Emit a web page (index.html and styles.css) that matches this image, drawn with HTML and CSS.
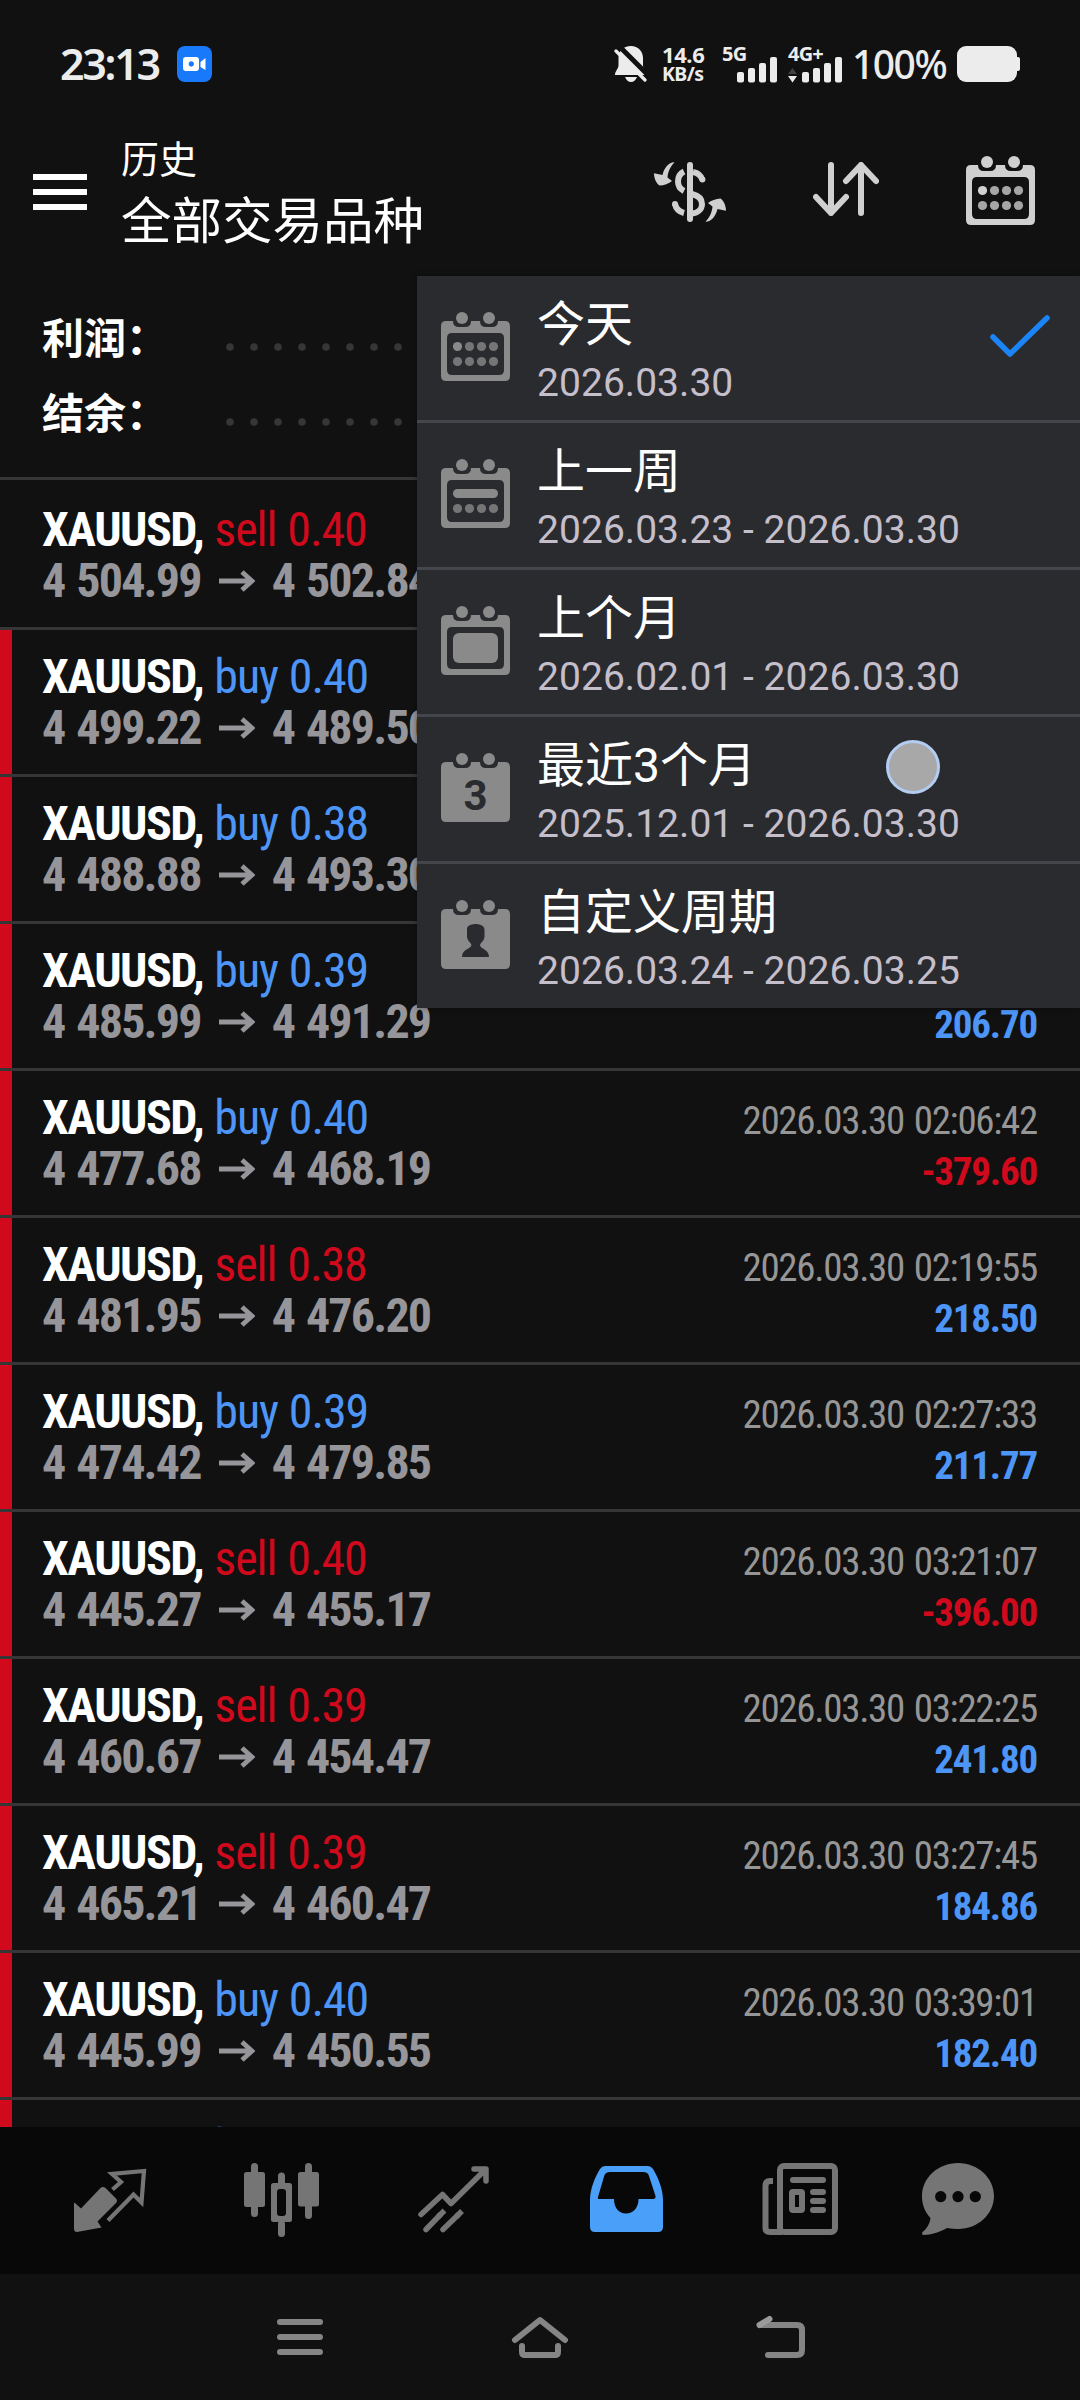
FILE: index.html
```html
<!DOCTYPE html>
<html lang="zh-CN">
<head>
<meta charset="utf-8">
<title>历史</title>
<link rel="stylesheet" href="styles.css">
</head>
<body>
<svg width="0" height="0" class="defs">
  <symbol id="cal-frame" viewBox="0 0 69 69">
    <path fill-rule="evenodd" fill="currentColor" d="M5 9H12Q12 15 18 15H24Q30 15 30 9H39Q39 15 45 15H51Q57 15 57 9H64Q69 9 69 14V64Q69 69 64 69H5Q0 69 0 64V14Q0 9 5 9ZM11 21Q6 21 6 26V58Q6 63 11 63H58Q63 63 63 58V26Q63 21 58 21Z"/>
    <circle cx="21" cy="6" r="6" fill="currentColor"/><circle cx="48" cy="6" r="6" fill="currentColor"/>
  </symbol>
  <symbol id="cal-solid" viewBox="0 0 69 69">
    <path fill="currentColor" d="M5 9H12Q12 15 18 15H24Q30 15 30 9H39Q39 15 45 15H51Q57 15 57 9H64Q69 9 69 14V64Q69 69 64 69H5Q0 69 0 64V14Q0 9 5 9Z"/>
    <circle cx="21" cy="6" r="6" fill="currentColor"/><circle cx="48" cy="6" r="6" fill="currentColor"/>
  </symbol>
  <symbol id="cal-dots" viewBox="0 0 69 69">
    <circle cx="16.5" cy="34.5" r="4.6" fill="currentColor"/>
    <g fill="currentColor" opacity=".78"><circle cx="28.5" cy="34.5" r="4.6"/><circle cx="40.5" cy="34.5" r="4.6"/><circle cx="52.5" cy="34.5" r="4.6"/></g>
  </symbol>
  <symbol id="cal-dots2" viewBox="0 0 69 69">
    <g fill="currentColor" opacity=".78"><circle cx="16.5" cy="49.5" r="4.6"/><circle cx="28.5" cy="49.5" r="4.6"/><circle cx="40.5" cy="49.5" r="4.6"/><circle cx="52.5" cy="49.5" r="4.6"/></g>
  </symbol>
  <symbol id="arrow" viewBox="0 0 36 22">
    <path d="M0 11H32M23 2L33 11L23 20" fill="none" stroke="currentColor" stroke-width="4.8"/>
  </symbol>
</svg>
<div class="screen">
  <header class="status">
    <span class="clock">23:13</span>
    <svg class="cam" width="35" height="36" viewBox="0 0 35 36"><rect width="35" height="36" rx="8" fill="#1979fb"/><path fill="#fff" fill-rule="evenodd" d="M9 11H19Q22 11 22 14V22Q22 25 19 25H9Q6 25 6 22V14Q6 11 9 11ZM14.300 15.300a2.700 2.700 0 1 0 .01 0Z"/><path fill="#fff" d="M23.500 16L28.500 12V24L23.500 21Z"/></svg>
    <svg class="bell" width="34" height="37" viewBox="0 0 34 37"><path fill="#ececec" d="M17 0C9 0 4.500 5 4.500 12V19C4.500 23 1 25 1 29H32C32 25 29 23 29 19V12C29 5 24 0 17 0ZM11 31H23Q21 36 17 36T11 31Z"/><path d="M5 0L36 31" stroke="#111" stroke-width="5"/><path d="M2 5L31 34" stroke="#ececec" stroke-width="3.200" stroke-linecap="round"/></svg>
    <span class="speed"><b>14.6</b><i>KB/s</i></span>
    <span class="sim sim-a"><b>5G</b>
      <svg width="40" height="26" viewBox="0 0 40 26" fill="#ececec"><rect x="0" y="15" width="7" height="10.500" rx="2"/><rect x="11" y="11" width="7" height="14.500" rx="2"/><rect x="22" y="6" width="7" height="19.500" rx="2"/><rect x="33" y="0" width="7" height="25.500" rx="2"/></svg></span>
    <span class="sim sim-b"><b>4G+</b>
      <svg width="54" height="26" viewBox="-14 0 54 26" fill="#ececec"><path d="M-14 17L-9.500 11L-5 17Z" opacity=".22"/><path d="M-14 19H-5L-9.500 25.500Z"/><rect x="0" y="15" width="7" height="10.500" rx="2"/><rect x="11" y="11" width="7" height="14.500" rx="2"/><rect x="22" y="6" width="7" height="19.500" rx="2"/><rect x="33" y="0" width="7" height="25.500" rx="2"/></svg></span>
    <span class="pct">100%</span>
    <svg class="batt" width="63" height="36" viewBox="0 0 63 36" fill="#ececec"><rect width="60" height="36" rx="9"/><rect x="57" y="11" width="6" height="14" rx="2"/></svg>
  </header>

  <div class="appbar">
    <div class="burger"><span></span><span></span><span></span></div>
    <div class="titles"><div class="sub">历史</div><div class="title">全部交易品种</div></div>
    <div class="actions">
      <svg width="72" height="60" viewBox="0 0 72 60"><g fill="none" stroke="currentColor" stroke-width="6"><path d="M36 3V57" stroke-linecap="round"/><path d="M30 9.500Q24 12.500 24 19.500Q24 26 30 29"/><path d="M21 42Q22.500 49 30 51"/><path d="M39 10C44 11 47 13 48.500 18"/><path d="M38 32C46 34 48 38 48 42C48 47 44 51 38 51.500"/></g><g fill="currentColor"><circle cx="21" cy="42" r="3"/><circle cx="48.400" cy="17.500" r="3"/><path id="swirl" d="M20.500 .3C15 0 10 6 8.500 13L0 11.300C0 16 2 21 5.500 23.600C10 23.500 15 21.500 18 19L13.500 15.500C14 9 17 4 20.500 .3Z"/><use href="#swirl" transform="rotate(180 36 30)"/></g></svg>
      <svg width="66" height="54" viewBox="0 0 66 54" fill="none" stroke="currentColor" stroke-width="6" stroke-linecap="round" stroke-linejoin="round"><path d="M18 3V51M3 35L18 51L33 35M48 51V3M33 19L48 3L63 19"/></svg>
      <svg class="cal" width="69" height="69"><use href="#cal-frame"/><use href="#cal-dots"/><use href="#cal-dots2"/></svg>
    </div>
  </div>

  <section class="summary">
    <div class="sum-row"><span>利润：</span><svg width="440" height="8"><path d="M4 4H436" stroke="#363636" stroke-width="7.600" stroke-linecap="round" stroke-dasharray="0 24"/></svg></div>
    <div class="sum-row"><span>结余：</span><svg width="440" height="8"><path d="M4 4H436" stroke="#363636" stroke-width="7.600" stroke-linecap="round" stroke-dasharray="0 24"/></svg></div>
  </section>

  <main class="list">
    <div class="row plain"><div class="l"><p><b>XAUUSD,</b> <span class="sell">sell 0.40</span></p><p class="px">4 504.99<svg><use href="#arrow"/></svg>4 502.84</p></div></div>
    <div class="row"><div class="l"><p><b>XAUUSD,</b> <span class="buy">buy 0.40</span></p><p class="px">4 499.22<svg><use href="#arrow"/></svg>4 489.50</p></div></div>
    <div class="row"><div class="l"><p><b>XAUUSD,</b> <span class="buy">buy 0.38</span></p><p class="px">4 488.88<svg><use href="#arrow"/></svg>4 493.30</p></div></div>
    <div class="row"><div class="l"><p><b>XAUUSD,</b> <span class="buy">buy 0.39</span></p><p class="px">4 485.99<svg><use href="#arrow"/></svg>4 491.29</p></div><div class="r"><p>&nbsp;</p><p class="amt buy">206.70</p></div></div>
    <div class="row"><div class="l"><p><b>XAUUSD,</b> <span class="buy">buy 0.40</span></p><p class="px">4 477.68<svg><use href="#arrow"/></svg>4 468.19</p></div><div class="r"><p>2026.03.30 02:06:42</p><p class="amt sell">-379.60</p></div></div>
    <div class="row"><div class="l"><p><b>XAUUSD,</b> <span class="sell">sell 0.38</span></p><p class="px">4 481.95<svg><use href="#arrow"/></svg>4 476.20</p></div><div class="r"><p>2026.03.30 02:19:55</p><p class="amt buy">218.50</p></div></div>
    <div class="row"><div class="l"><p><b>XAUUSD,</b> <span class="buy">buy 0.39</span></p><p class="px">4 474.42<svg><use href="#arrow"/></svg>4 479.85</p></div><div class="r"><p>2026.03.30 02:27:33</p><p class="amt buy">211.77</p></div></div>
    <div class="row"><div class="l"><p><b>XAUUSD,</b> <span class="sell">sell 0.40</span></p><p class="px">4 445.27<svg><use href="#arrow"/></svg>4 455.17</p></div><div class="r"><p>2026.03.30 03:21:07</p><p class="amt sell">-396.00</p></div></div>
    <div class="row"><div class="l"><p><b>XAUUSD,</b> <span class="sell">sell 0.39</span></p><p class="px">4 460.67<svg><use href="#arrow"/></svg>4 454.47</p></div><div class="r"><p>2026.03.30 03:22:25</p><p class="amt buy">241.80</p></div></div>
    <div class="row"><div class="l"><p><b>XAUUSD,</b> <span class="sell">sell 0.39</span></p><p class="px">4 465.21<svg><use href="#arrow"/></svg>4 460.47</p></div><div class="r"><p>2026.03.30 03:27:45</p><p class="amt buy">184.86</p></div></div>
    <div class="row"><div class="l"><p><b>XAUUSD,</b> <span class="buy">buy 0.40</span></p><p class="px">4 445.99<svg><use href="#arrow"/></svg>4 450.55</p></div><div class="r"><p>2026.03.30 03:39:01</p><p class="amt buy">182.40</p></div></div>
    <div class="row"><div class="l"><p><b>XAUUSD,</b> <span class="buy">buy</span></p></div></div>
  </main>

  <nav class="tabs">
    <svg viewBox="64 2155 96 90"><path fill="currentColor" d="M74 2203L75 2203L81 2208.500L100.500 2188Q103 2186 105.500 2188L116 2198.500Q118 2201 116 2203L97.500 2221.500L101.500 2227.500L77 2232Q74 2232 74 2229Z"/><path fill="none" stroke="currentColor" stroke-width="4.200" d="M112.500 2189.500L121 2182L112 2174L144 2171L141.500 2202.500L133.500 2194.500L108 2220.500"/></svg>
    <svg viewBox="233 2155 96 90"><g fill="none" stroke="currentColor" stroke-width="7" stroke-linecap="round"><path d="M254.500 2166.500V2213.500M308.500 2166.500V2215.500M281.500 2176V2183M281.500 2224V2233.500"/></g><g fill="currentColor"><rect x="244" y="2172" width="21" height="35" rx="2.500"/><rect x="298" y="2172" width="21" height="34.500" rx="2.500"/><path fill-rule="evenodd" d="M273.500 2183H289.500Q292 2183 292 2185.500V2219.500Q292 2222 289.500 2222H273.500Q271 2222 271 2219.500V2185.500Q271 2183 273.500 2183ZM280 2189Q277 2189 277 2192V2213Q277 2216 280 2216H283Q286 2216 286 2213V2192Q286 2189 283 2189Z"/></g></svg>
    <svg viewBox="405 2155 96 90" fill="none" stroke="currentColor" stroke-width="5.500" stroke-linecap="round"><path stroke-linejoin="round" d="M421 2214.500L442.500 2194.500L451 2203.500L485 2170M474 2169H486V2181"/><path d="M426 2229.500L440 2215M443 2229.500L458 2215"/><path stroke-linecap="butt" d="M438 2217L444.500 2210.500M456 2217L462 2211"/></svg>
    <svg class="on" viewBox="578 2155 96 90"><path fill="currentColor" fill-rule="evenodd" d="M590 2227V2200C590 2189 595 2177 600 2169Q602 2166 605 2166H648Q651 2166 653 2169C658 2177 663 2189 663 2200V2227Q663 2232 658 2232H595Q590 2232 590 2227ZM598 2197Q597 2199 600 2199H614C614 2208 619 2213.500 626 2213.500S638.500 2208 638.500 2199H653Q656 2199 655.500 2196L649 2176Q648 2172 643 2172H610Q606 2172 604.500 2175Z"/></svg>
    <svg viewBox="752 2155 96 90" fill="none" stroke="currentColor" stroke-width="6"><rect x="780" y="2166" width="55" height="66" rx="4"/><path d="M773 2181H770Q765.500 2181 765.500 2186V2228Q765.500 2232 770 2232H782"/><path stroke-linecap="round" d="M793 2180H823M813 2192H823M813 2201H823M813 2210H823"/><rect x="792" y="2192" width="10" height="18" rx="1"/></svg>
    <svg viewBox="910 2155 96 90"><path fill="currentColor" fill-rule="evenodd" d="M958 2163C978 2163 994 2178 994 2196S978 2229 958 2229Q952 2229 947 2228C940 2232 931 2235 924 2235Q921 2234.500 922.500 2232C927 2229 930 2223 930.500 2218C925 2212 922 2205 922 2196C922 2178 938 2163 958 2163ZM940.700 2191a5.600 5.600 0 1 0 .01 0ZM958 2191a5.600 5.600 0 1 0 .01 0ZM975.300 2191a5.600 5.600 0 1 0 .01 0Z"/></svg>
  </nav>
  <footer class="sys">
    <svg viewBox="0 0 60 46"><path d="M10 8H50M10 23H50M10 38H50"/></svg>
    <svg viewBox="0 0 60 46"><path stroke-linejoin="round" d="M5 26L30 6L55 26M12 32V38Q12 41 15 41H45Q48 41 48 38V32"/></svg>
    <svg viewBox="0 0 60 46"><path d="M10 11H47Q52 11 52 16V36Q52 41 47 41H18"/><path class="faint" d="M9.500 11L19.500 5"/></svg>
  </footer>

  <div class="menu">
    <div class="item"><svg width="69" height="69"><use href="#cal-frame"/><use href="#cal-dots"/><use href="#cal-dots2"/></svg><div><p class="name">今天</p><p class="range">2026.03.30</p></div>
      <svg class="check" width="60" height="42" viewBox="0 0 60 42"><path d="M3 22L20 39L57 3" fill="none" stroke="#1b84f6" stroke-width="5.500" stroke-linecap="round" stroke-linejoin="round"/></svg></div>
    <div class="item"><svg width="69" height="69"><use href="#cal-frame"/><rect x="12" y="30" width="45" height="9" rx="4.500" fill="currentColor"/><use href="#cal-dots2"/></svg><div><p class="name">上一周</p><p class="range">2026.03.23 - 2026.03.30</p></div></div>
    <div class="item"><svg width="69" height="69"><use href="#cal-frame"/><rect x="12" y="27" width="45" height="30" rx="6" fill="currentColor"/></svg><div><p class="name">上个月</p><p class="range">2026.02.01 - 2026.03.30</p></div></div>
    <div class="item"><svg width="69" height="69"><use href="#cal-solid"/><text class="three" x="34.500" y="57" text-anchor="middle">3</text></svg><div><p class="name">最近3个月</p><p class="range">2025.12.01 - 2026.03.30</p></div></div>
    <div class="item"><svg width="69" height="69"><use href="#cal-solid"/><path fill="#2a2b2f" d="M34 24C40 24 44 26 43.500 31V37C43 41 40 42 39 45C39 49 48 49 48 57H21C21 49 30 49 30.500 45C29.500 42 26.500 41 26 37V28Q27 24.500 34 24Z"/></svg><div><p class="name">自定义周期</p><p class="range">2026.03.24 - 2026.03.25</p></div></div>
    <span class="touch"></span>
  </div>
</div>
</body>
</html>
```
FILE: styles.css
```css
* { box-sizing: border-box; }
body { margin: 0; background: #111; }
p { margin: 0; }
svg { display: block; flex: none; }
.defs { position: absolute; }

.screen {
  position: relative;
  display: flex;
  flex-direction: column;
  width: 1080px;
  height: 2400px;
  overflow: hidden;
  background: #111;
  color: #fff;
  font-family: "Roboto", "Noto Sans CJK SC", sans-serif;
}

/* status bar */
.status {
  display: flex;
  align-items: flex-start;
  height: 132px;
  padding: 46px 60px 0 60px;
  color: #ececec;
  font-family: "Noto Sans", sans-serif;
  white-space: nowrap;
}
.clock { width: 117px; font-size: 43px; font-weight: 600; line-height: 35px; letter-spacing: -2.300px; }
.bell { margin-left: 402px; }
.speed { display: flex; flex-direction: column; width: 60px; margin-left: 14px; }
.speed b { font-size: 22px; font-weight: 700; line-height: 17px; letter-spacing: -.4px; }
.speed i { margin-top: 2px; font-size: 19.500px; font-style: normal; font-weight: 700; line-height: 18px; letter-spacing: -.6px; }
.sim { display: flex; flex-direction: column; }
.sim b { height: 11px; font-size: 20px; font-weight: 700; line-height: 15px; letter-spacing: -.8px; }
.sim svg { align-self: flex-end; }
.sim-a { width: 55px; }
.sim-b { width: 54px; margin-left: 11px; }
.pct { width: 105px; margin-left: 10px; font-size: 39px; font-weight: 500; line-height: 36px; letter-spacing: -1.500px; }

/* app bar */
.appbar { display: flex; height: 144px; padding-left: 33px; }
.burger { display: flex; flex-direction: column; gap: 9px; width: 54px; margin-top: 42px; }
.burger span { height: 6px; background: #fff; }
.titles { margin-left: 34px; white-space: nowrap; }
.sub { margin-top: 6px; font-size: 38px; line-height: 44px; }
.title { margin-top: 11px; font-size: 50.500px; line-height: 58px; }
.actions { display: flex; align-items: flex-start; gap: 87px; margin: 30px 45px 0 auto; color: #d0d0d0; }
.actions .cal { margin-top: -6px; }

/* totals */
.summary { height: 204px; padding: 26px 0 0 42px; border-bottom: 3px solid #363636; }
.sum-row { display: flex; align-items: center; height: 75px; font-size: 42px; font-weight: 700; line-height: 42px; }
.sum-row span { width: 184px; }
.sum-row svg { margin-top: 15px; }

/* deals */
.list { flex: 1; min-height: 0; overflow: hidden; font-family: "Roboto Condensed", "Roboto", sans-serif; font-stretch: 75%; }
.row {
  display: flex;
  justify-content: space-between;
  height: 147px;
  padding: 21px 42px 0 42px;
  border-bottom: 3px solid #363636;
  background: linear-gradient(#d0091c, #d0091c) 0 0 / 12px 100% no-repeat;
  white-space: nowrap;
}
.row.plain { height: 150px; padding-top: 24px; background: none; }
.l { font-size: 48px; line-height: 51px; }
.l b { letter-spacing: -1.500px; }
.l span { letter-spacing: -1.100px; word-spacing: 1px; }
.px { display: flex; align-items: center; color: #96959a; font-weight: 700; letter-spacing: -1.800px; word-spacing: 2.500px; }
.px svg { width: 36px; height: 22px; margin: 0 17px 0 18px; }
.r { padding-top: 4px; font-size: 39px; line-height: 51px; text-align: right; color: #969696; letter-spacing: -1.300px; word-spacing: 2px; }
.r p { margin-right: 1px; }
.amt { font-weight: 700; letter-spacing: -1.200px; }
.sell { color: #d0091c; }
.buy { color: #4d96f8; }

/* bottom tabs and system buttons */
.tabs { display: flex; height: 147px; padding: 28px 0 0 64px; background: #080808; color: #757575; }
.tabs svg { width: 96px; height: 90px; }
.tabs svg + svg { margin-left: 73px; }
.tabs svg:nth-child(3) { margin-left: 76px; }
.tabs svg:nth-child(4) { margin-left: 77px; }
.tabs svg:nth-child(5) { margin-left: 78px; }
.tabs svg:nth-child(6) { margin-left: 62px; }
.tabs .on { color: #4a9ff9; }
.sys { display: flex; justify-content: center; gap: 180px; height: 126px; padding-top: 40px; }
.sys svg { width: 60px; height: 46px; fill: none; stroke: #858585; stroke-width: 6; stroke-linecap: round; }
.sys .faint { stroke: #9a9a9a; }

/* period menu */
.menu { position: absolute; left: 417px; top: 276px; width: 663px; height: 732px; background: #2a2b2f; box-shadow: 0 0 6px rgba(0, 0, 0, .4); }
.item { display: flex; height: 147px; padding: 36px 30px 0 24px; border-bottom: 3px solid #45464b; color: #8a8a8b; white-space: nowrap; }
.item:nth-child(5) { border-bottom: 0; }
.item div { margin: -17px 0 0 27px; }
.name { color: #fff; font-size: 48px; line-height: 60px; }
.range { margin-top: 1px; color: #c5bfcb; font-size: 39px; line-height: 54px; letter-spacing: .04px; }
.check { margin: 3px 0 0 auto; }
.three { font: 700 42px "Roboto", sans-serif; fill: #2a2b2f; }
.touch { position: absolute; left: 469px; top: 464px; width: 54px; height: 54px; border: 3px solid #b3ccf2; border-radius: 50%; background: #a8a8a8; }
```
